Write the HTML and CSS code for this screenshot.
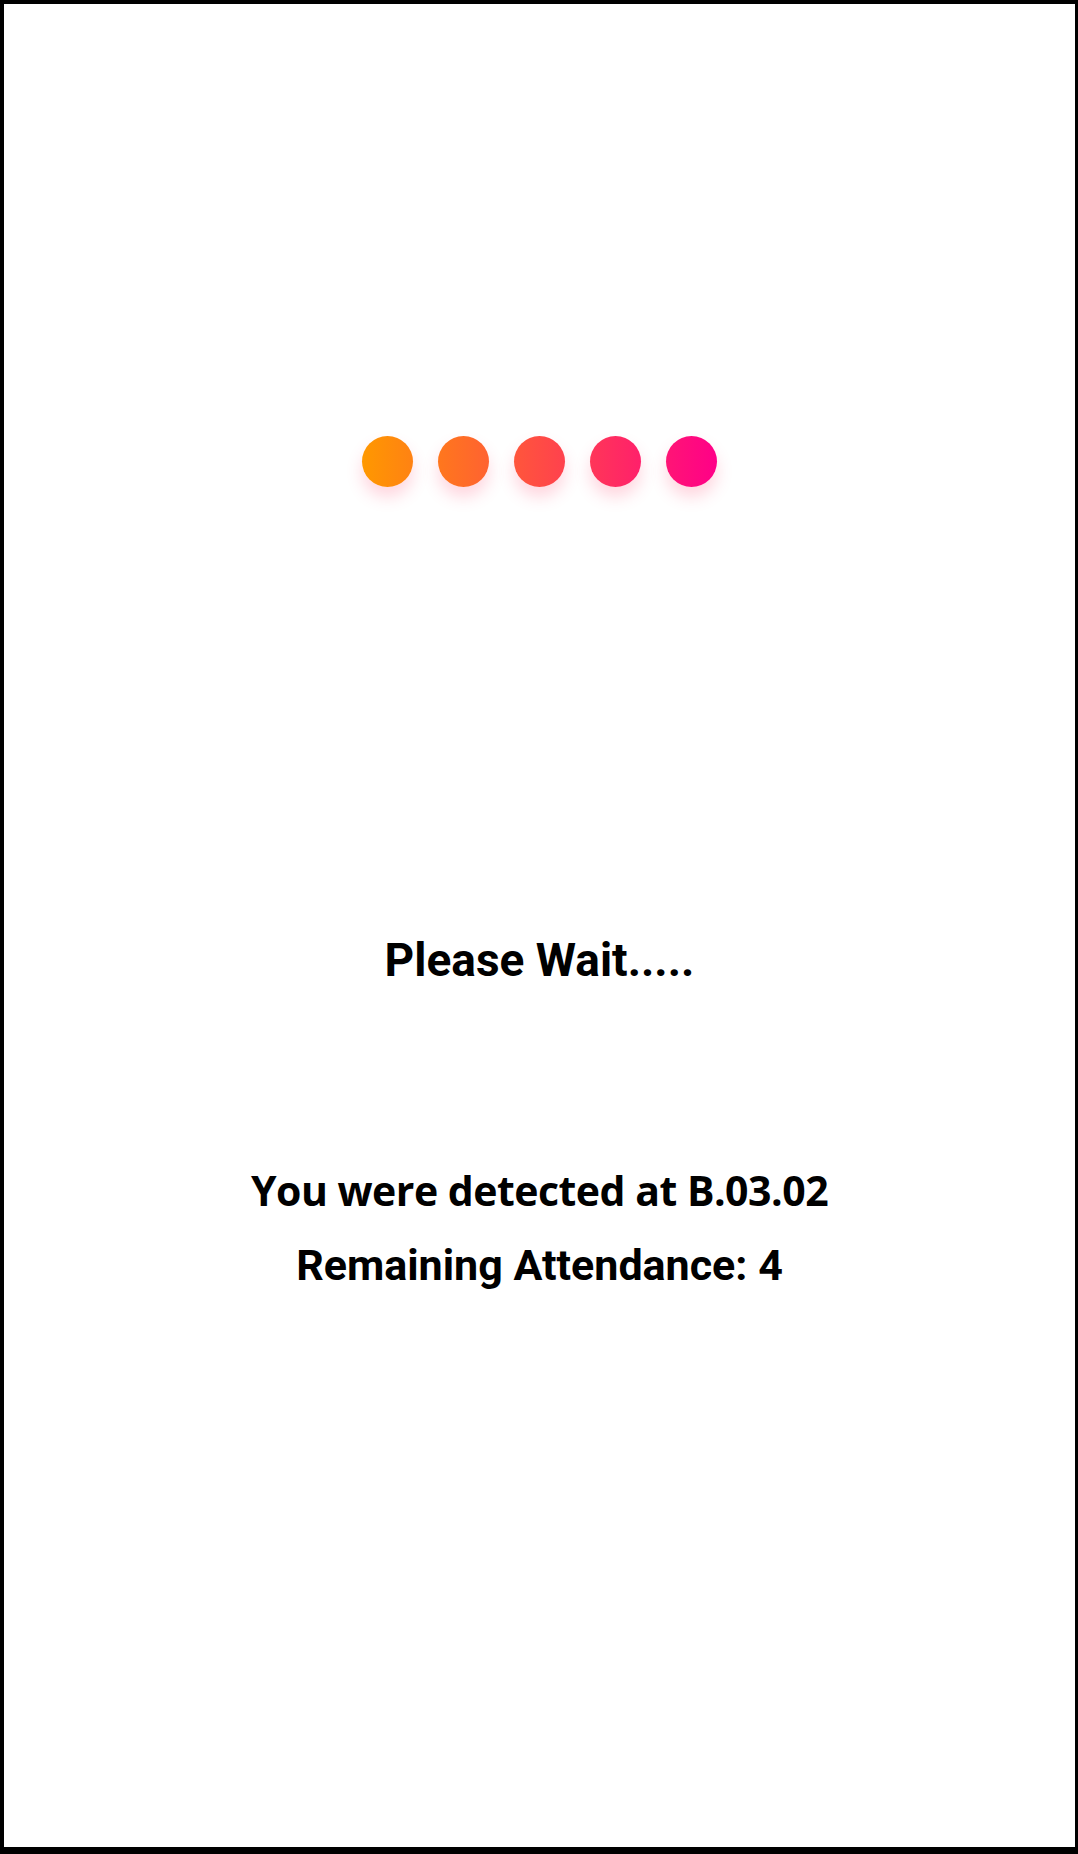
FILE: index.html
```html
<!DOCTYPE html>
<html lang="en">
<head>
<meta charset="utf-8">
<title>Please Wait</title>
<link rel="stylesheet" href="styles.css">
</head>
<body>
<main class="frame">
  <div class="loader">
    <span class="dot d1"></span>
    <span class="dot d2"></span>
    <span class="dot d3"></span>
    <span class="dot d4"></span>
    <span class="dot d5"></span>
  </div>
  <h1 class="wait">Please Wait.....</h1>
  <p class="detected">You were detected at B.03.02</p>
  <p class="remaining">Remaining Attendance: 4</p>
</main>
</body>
</html>
```

FILE: styles.css
```css
* { box-sizing: border-box; }
html, body { margin: 0; padding: 0; background: #fff; }
.frame {
  width: 1078px;
  height: 1854px;
  border-style: solid;
  border-color: #000;
  border-width: 4px 3px 7px 4px;
  display: flex;
  flex-direction: column;
  align-items: center;
  padding-top: 432px;
  color: #000;
}
.loader {
  display: flex;
  gap: 25px;
  height: 51px;
}
.dot {
  width: 51px;
  height: 51px;
  border-radius: 50%;
  box-shadow: 0 10px 16px rgba(255, 70, 110, 0.22);
}
.d1 { background: linear-gradient(90deg, #ff9800, #ff8213); }
.d2 { background: linear-gradient(90deg, #ff771d, #ff6231); }
.d3 { background: linear-gradient(90deg, #ff563b, #ff414e); }
.d4 { background: linear-gradient(90deg, #ff3658, #ff206b); }
.d5 { background: linear-gradient(90deg, #ff1575, #ff0088); }
.wait {
  margin: 445px 0 0;
  font-family: Roboto, "Liberation Sans", sans-serif;
  font-weight: 700;
  font-size: 46px;
  line-height: 56px;
}
.detected {
  margin: 176px 0 0;
  font-family: "Open Sans", "Liberation Sans", sans-serif;
  font-weight: 700;
  font-size: 41px;
  line-height: 52px;
  letter-spacing: -0.5px;
}
.remaining {
  margin: 23px 0 0;
  font-family: Roboto, "Liberation Sans", sans-serif;
  font-weight: 700;
  font-size: 43px;
  line-height: 52px;
}
```
